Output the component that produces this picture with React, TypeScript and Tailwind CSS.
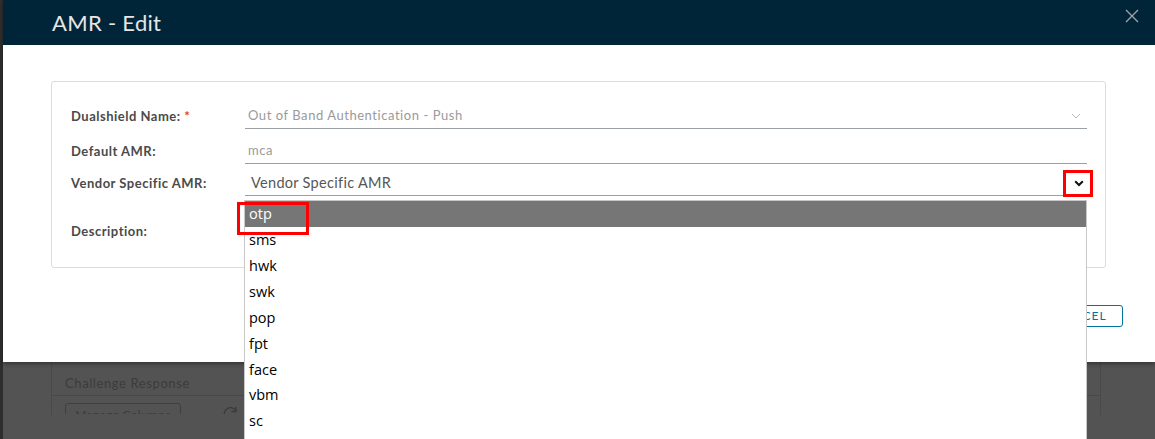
import React from "react";

const items = ["otp", "sms", "hwk", "swk", "pop", "fpt", "face", "vbm", "sc"];

export default function App() {
  return (
    <div
      className="relative w-[1155px] h-[439px] overflow-hidden bg-[#535353]"
      style={{ fontFamily: "Lato, 'Open Sans', sans-serif" }}
    >
      {/* left dark strip */}
      <div className="absolute left-0 top-0 w-[3px] h-full bg-[#2e2e2e]" />

      {/* background page (dimmed) */}
      <div className="absolute left-[51px] top-[362px] w-[1050px] h-[53px] border-l border-r border-[#4a4a4a]">
        <div className="h-[34px] border-b border-[#484848] pl-[13px] flex items-end pb-[2px]">
          <span className="text-[13px] text-[#3c3c3c] tracking-[0.6px]">Challenge Response</span>
        </div>
        <div className="pl-[13px] pt-[7px] flex items-start gap-[42px] h-[18px] overflow-hidden">
          <div className="w-[116px] h-[24px] border border-[#3f3f3f] rounded-[3px] text-[12px] text-[#3c3c3c] flex items-center justify-center tracking-wide">
            Manage Columns
          </div>
          <svg width="16" height="16" viewBox="0 0 16 16" className="mt-[2px]">
            <path d="M2 12 A6 6 0 0 1 13 6" fill="none" stroke="#3a3a3a" strokeWidth="1.3" />
            <path d="M13 2 L13 6.5 L8.5 6.5" fill="none" stroke="#3a3a3a" strokeWidth="1.3" />
          </svg>
        </div>
      </div>

      {/* modal */}
      <div className="absolute left-[3px] top-0 w-[1152px] h-[362px] bg-white shadow-[0_2px_4px_rgba(0,0,0,0.35)]">
        <div className="h-[45px] bg-[#002538] flex items-center justify-between pl-[49px] pr-[16px]">
          <span className="text-[22px] text-[#e6e6e6] tracking-[0.3px]">AMR - Edit</span>
          <svg width="14" height="14" viewBox="0 0 14 14" className="-mt-[13px]">
            <path d="M1 1 L13 13 M13 1 L1 13" stroke="#9aa3aa" strokeWidth="1.4" />
          </svg>
        </div>

        <div className="pl-[48px] pt-[36px]">
          <div className="w-[1055px] h-[187px] border border-[#dcdcdc] rounded-[3px] pl-[19px]">
            {/* row 1 */}
            <div className="flex items-center mt-[22px] h-[25px]">
              <div className="w-[174px] text-[13px] font-bold text-[#4a4a4a] tracking-[0.5px]">
                Dualshield Name: <span className="text-[#e0412c]">*</span>
              </div>
              <div className="w-[842px] h-[25px] border-b border-[#9aa0a4] flex items-center justify-between pl-[3px] pr-[6px]">
                <span className="text-[13px] text-[#9a9a9a] tracking-[0.55px]">Out of Band Authentication - Push</span>
                <svg width="10" height="6" viewBox="0 0 10 6">
                  <path d="M1 1 L5 5 L9 1" fill="none" stroke="#b8b8b8" strokeWidth="1" />
                </svg>
              </div>
            </div>
            {/* row 2 */}
            <div className="flex items-center mt-[10px] h-[25px]">
              <div className="w-[174px] text-[13px] font-bold text-[#4a4a4a] tracking-[0.5px]">Default AMR:</div>
              <div className="w-[842px] h-[25px] border-b border-[#9aa0a4] flex items-center pl-[3px]">
                <span className="text-[13px] text-[#9a9a9a] tracking-[0.55px]">mca</span>
              </div>
            </div>
            {/* row 3 */}
            <div className="flex items-center mt-[7px] h-[25px]">
              <div className="w-[174px] text-[13px] font-bold text-[#4a4a4a] tracking-[0.5px]">Vendor Specific AMR:</div>
              <div className="w-[842px] h-[25px] border-b border-[#9aa0a4] flex items-center justify-between pl-[6px] pr-[3px]">
                <span className="text-[14.5px] text-[#565656] tracking-[0.3px]">Vendor Specific AMR</span>
                <svg width="10" height="7" viewBox="0 0 10 7">
                  <path d="M1.2 1.2 L5 5 L8.8 1.2" fill="none" stroke="#111" strokeWidth="2" />
                </svg>
              </div>
            </div>
            {/* row 4 */}
            <div className="flex items-center mt-[24px] h-[24px]">
              <div className="w-[174px] text-[13px] font-bold text-[#4a4a4a] tracking-[0.5px]">Description:</div>
            </div>
          </div>
        </div>

        {/* footer button */}
        <div className="absolute left-[1035px] top-[305px] w-[85px] h-[22px] border border-[#0072a3] rounded-[3px] flex items-center justify-center">
          <span className="text-[12px] text-[#0072a3] tracking-[1px]">CANCEL</span>
        </div>
      </div>

      {/* red box around chevron */}
      <div className="absolute left-[1063px] top-[170px] w-[30px] h-[27px] border-[3px] border-[#ff0000]" />

      {/* dropdown list */}
      <div
        className="absolute left-[244px] top-[200px] w-[843px] h-[240px] bg-white border border-[#c8c8c8] border-b-0"
        style={{ fontFamily: "'Open Sans', 'Noto Sans', sans-serif" }}
      >
        {items.map((it, i) => (
          <div
            key={it}
            className={
              i === 0
                ? "h-[26px] flex items-center pl-[4px] bg-[#767676] text-white text-[14.5px]"
                : "h-[25.9px] flex items-center pl-[4px] text-black text-[14.5px]"
            }
          >
            {it}
          </div>
        ))}
      </div>

      {/* red box around otp */}
      <div className="absolute left-[237px] top-[202px] w-[72px] h-[33px] border-[3px] border-[#ff0000]" />
    </div>
  );
}
